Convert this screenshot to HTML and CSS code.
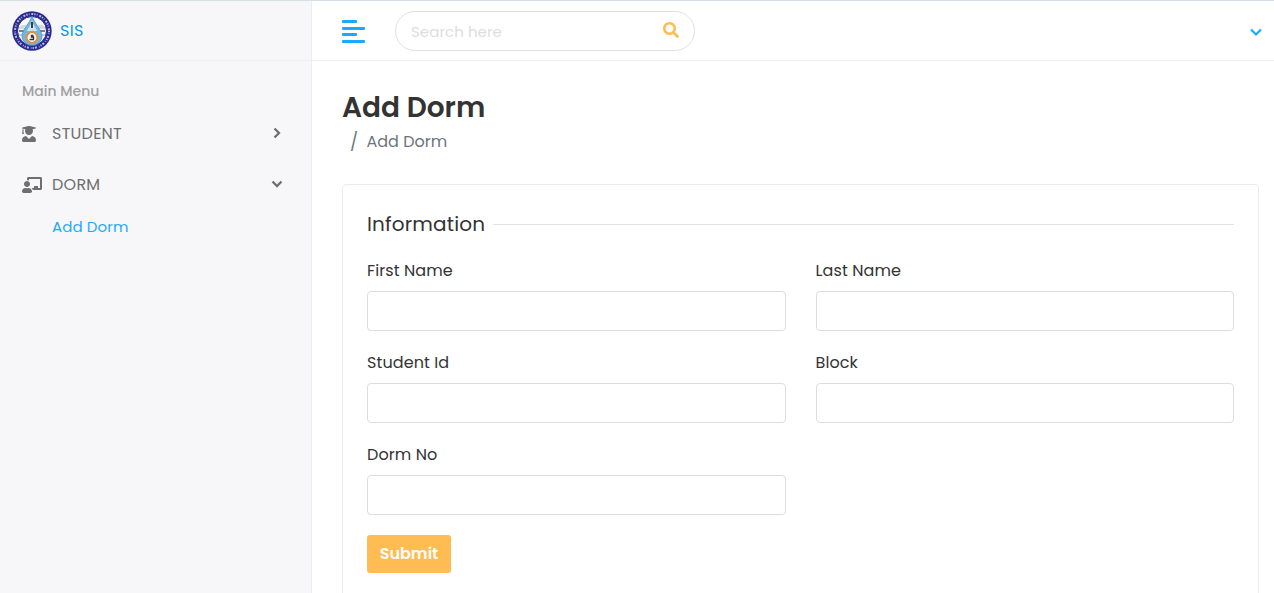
FILE: index.html
```html
<!DOCTYPE html>
<html lang="en">
<head>
<meta charset="utf-8">
<title>SIS - Add Dorm</title>
<link rel="stylesheet" href="styles.css">
</head>
<body>
<div class="app">
  <aside class="sidebar">
    <a class="brand">
      <svg class="logo" viewBox="0 0 40 40">
        <circle cx="20" cy="20" r="19.7" fill="#29278f"/>
        <circle cx="20" cy="20" r="17" fill="none" stroke="#b9badf" stroke-width="2" stroke-dasharray="1.3 1.2 .7 1.9 2 1.1"/>
        <circle cx="20" cy="20" r="14.5" fill="#f5f7f8" stroke="#29278f" stroke-width="1"/>
        <path d="M7 16q5-4 9-1t9 0 8 1v2H7z" fill="#d2dade"/>
        <path d="M7 20h5M28 20h5" stroke="#555" stroke-width="1.6"/>
        <path d="M7 24h8M25 24h8" stroke="#b7d4e5" stroke-width="2"/>
        <path d="M20 5C18 12 10 19 10 25a10 9.5 0 0 0 20 0C30 19 22 12 20 5z" fill="#70b7e5" stroke="#3f88bf" stroke-width=".7"/>
        <path d="M20 9c-1 5-4 8-5 11h10c-1-3-4-6-5-11z" fill="#c8e6f7"/>
        <path d="M20 11v6" stroke="#4b3b37" stroke-width="2"/>
        <circle cx="20" cy="26.5" r="5.2" fill="#fff" stroke="#e88d3e" stroke-width="1.6"/>
        <circle cx="20" cy="26.5" r="6.4" fill="none" stroke="#e88d3e" stroke-width="1" stroke-dasharray="1.5 1.2"/>
        <path d="M21.5 24.5h-2v1.5h2v2.5h-4" fill="none" stroke="#333" stroke-width="1.4"/>
      </svg>
      <span class="brand-name">SIS</span>
    </a>
    <nav class="menu">
      <div class="menu-title">Main Menu</div>
      <a class="item">
        <svg class="ico-student" viewBox="0 0 448 512"><path d="M319.4 320.6L224 416l-95.4-95.4C57.1 323.7 0 382.2 0 454.4v9.6c0 26.5 21.5 48 48 48h352c26.5 0 48-21.5 48-48v-9.6c0-72.2-57.1-130.7-128.6-133.8zM13.6 79.8l6.4 1.5v58.4c-7 4.2-12 11.5-12 20.3 0 8.4 4.6 15.4 11.1 19.7L3.5 242c-1.7 6.9 2.1 14 7.6 14h41.8c5.5 0 9.3-7.1 7.6-14l-15.6-62.3C51.4 175.4 56 168.4 56 160c0-8.8-5-16.1-12-20.3V87.1l66 15.9c-8.6 17.2-14 36.4-14 57 0 70.7 57.3 128 128 128s128-57.3 128-128c0-20.6-5.3-39.8-14-57l96.3-23.2c18.2-4.4 18.2-27.1 0-31.5l-190.4-46c-13-3.1-26.7-3.1-39.7 0L13.6 48.2c-18.1 4.4-18.1 27.2 0 31.6z"/></svg>
        <span class="item-label">STUDENT</span>
        <svg class="chev" viewBox="0 0 12 12"><path d="M3.5 1.5 8 6 3.5 10.5"/></svg>
      </a>
      <a class="item">
        <svg class="ico-dorm" viewBox="0 0 640 512"><path d="M208 352c-2.39 0-4.78.35-7.06 1.09C187.98 357.3 174.35 360 160 360c-14.35 0-27.98-2.7-40.95-6.91-2.28-.74-4.66-1.09-7.05-1.09C49.94 352-.33 402.48 0 464.62.14 490.88 21.73 512 48 512h224c26.27 0 47.86-21.12 48-47.38.33-62.14-49.94-112.62-112-112.62zm-48-32c53.02 0 96-42.98 96-96s-42.98-96-96-96-96 42.98-96 96 42.98 96 96 96zM592 0H208c-26.47 0-48 22.25-48 49.59V96c23.42 0 45.1 6.78 64 17.8V64h352v288h-64v-64H384v64h-76.24c19.1 16.69 33.12 38.73 39.69 64H592c26.47 0 48-22.25 48-49.59V49.59C640 22.25 618.47 0 592 0z"/></svg>
        <span class="item-label">DORM</span>
        <svg class="chev" viewBox="0 0 12 12"><path d="M1.5 3.5 6 8 10.5 3.5"/></svg>
      </a>
      <a class="subitem">Add Dorm</a>
    </nav>
  </aside>
  <div class="main">
    <header class="topbar">
      <div class="toggle"><i class="short"></i><i></i><i class="short"></i><i></i></div>
      <div class="search">
        <span class="placeholder">Search here</span>
        <svg viewBox="0 0 512 512"><path d="M505 442.7L405.3 343c-4.5-4.5-10.6-7-17-7H372c27.6-35.3 44-79.7 44-128C416 93.1 322.9 0 208 0S0 93.1 0 208s93.1 208 208 208c48.3 0 92.7-16.4 128-44v16.3c0 6.4 2.5 12.5 7 17l99.7 99.7c9.4 9.4 24.6 9.4 33.9 0l28.3-28.3c9.4-9.4 9.4-24.6.1-34zM208 336c-70.7 0-128-57.2-128-128 0-70.7 57.2-128 128-128 70.7 0 128 57.2 128 128 0 70.7-57.2 128-128 128z"/></svg>
      </div>
      <svg class="user-chev" viewBox="0 0 12 12"><path d="M1 3.5 6 8.5 11 3.5"/></svg>
    </header>
    <main class="content">
      <h1>Add Dorm</h1>
      <div class="crumbs"><span class="slash">/</span><span>Add Dorm</span></div>
      <section class="card">
        <h2><span>Information</span></h2>
        <form class="form">
          <label class="field"><span>First Name</span><input type="text"></label>
          <label class="field"><span>Last Name</span><input type="text"></label>
          <label class="field"><span>Student Id</span><input type="text"></label>
          <label class="field"><span>Block</span><input type="text"></label>
          <label class="field"><span>Dorm No</span><input type="text"></label>
        </form>
        <button class="submit" type="button">Submit</button>
      </section>
    </main>
  </div>
</div>
</body>
</html>
```
FILE: styles.css
```css
* { box-sizing: border-box; }
body { margin: 0; font-family: Poppins, Inter, sans-serif; font-size: 16px; color: #333; background: #fff; }
.app { display: flex; height: 593px; overflow: hidden; border-top: 1px solid #d5dfe9; }
.sidebar { width: 312px; flex: none; background: #f7f7fa; border-right: 1px solid #ebebf0; }
.brand { display: flex; align-items: center; gap: 8px; height: 60px; padding-left: 12px; border-bottom: 1px solid #efeff2; color: #009ce7; }
.brand-name { letter-spacing: .3px; }
.logo { width: 40px; height: 40px; }
.menu-title { padding: 20px 22px 0; line-height: 20px; font-size: 14px; font-weight: 500; color: #a0a0a0; }
.item { display: flex; align-items: center; height: 51px; padding: 0 28px 0 22px; color: #6f6f6f; }
.menu-title + .item { margin-top: 7px; }
.item svg { fill: currentColor; }
.item > svg:first-child { height: 16px; }
.item-label { letter-spacing: .25px; }
.ico-student { width: 14px; margin-right: 16px; }
.ico-dorm { width: 20px; margin-right: 10px; }
.item .chev { width: 12px; height: 12px; margin: -2px 0 0 auto; fill: none; stroke: currentColor; stroke-width: 2.3; }
.subitem { display: block; padding-left: 52px; font-size: 15px; line-height: 34px; letter-spacing: .1px; color: #27a9f8; }
.main { flex: 1; min-width: 0; }
.topbar { display: flex; align-items: center; height: 60px; padding: 0 12px 0 30px; border-bottom: 1px solid #f1f1f3; }
.toggle { display: flex; flex-direction: column; gap: 3.5px; width: 23px; margin-top: 2px; }
.toggle i { height: 3px; border-radius: 1px; background: #1ba8ff; }
.toggle .short { width: 15px; }
.search { display: flex; align-items: center; justify-content: space-between; width: 300px; height: 40px; margin: 1px 0 0 30px; padding: 0 15px; border: 1px solid #e0e0e0; border-radius: 20px; color: #ddd; }
.placeholder { font-size: 15px; letter-spacing: .05px; padding-top: 1px; }
.search svg { width: 16px; height: 16px; fill: #ffbc53; margin-top: -2px; }
.user-chev { width: 12px; height: 12px; margin: 3px 0 0 auto; fill: none; stroke: #1ba8ff; stroke-width: 2.2; }
.content { padding: 30px 15px 0 30px; }
h1 { margin: 0; font-size: 28px; line-height: 34px; font-weight: 600; }
.crumbs { display: flex; line-height: 24px; margin-top: 5px; padding-left: 8px; color: #6c757d; }
.slash { width: 16.5px; font-size: 17px; }
.card { height: 440px; margin-top: 30px; padding: 24px; border: 1px solid #ebebf5; border-radius: 4px; }
h2 { display: flex; align-items: center; gap: 8px; margin: 0 0 20px; font-size: 20px; line-height: 30px; font-weight: 400; letter-spacing: .16px; }
h2::after { content: ""; flex: 1; height: 1px; background: #e2e3e3; }
.form { display: grid; grid-template-columns: 1fr 1fr; gap: 20px 30px; }
.field { display: block; line-height: 24px; letter-spacing: .1px; }
.field input { display: block; width: 100%; height: 40px; margin-top: 8px; border: 1px solid #ddd; border-radius: 4px; background: #fff; }
.submit { display: block; width: 84px; height: 38px; margin-top: 20px; padding: 0; border: 0; border-radius: 3px; background: #ffbc53; color: #fff; font: 600 16px/24px Poppins, Inter, sans-serif; }
```
